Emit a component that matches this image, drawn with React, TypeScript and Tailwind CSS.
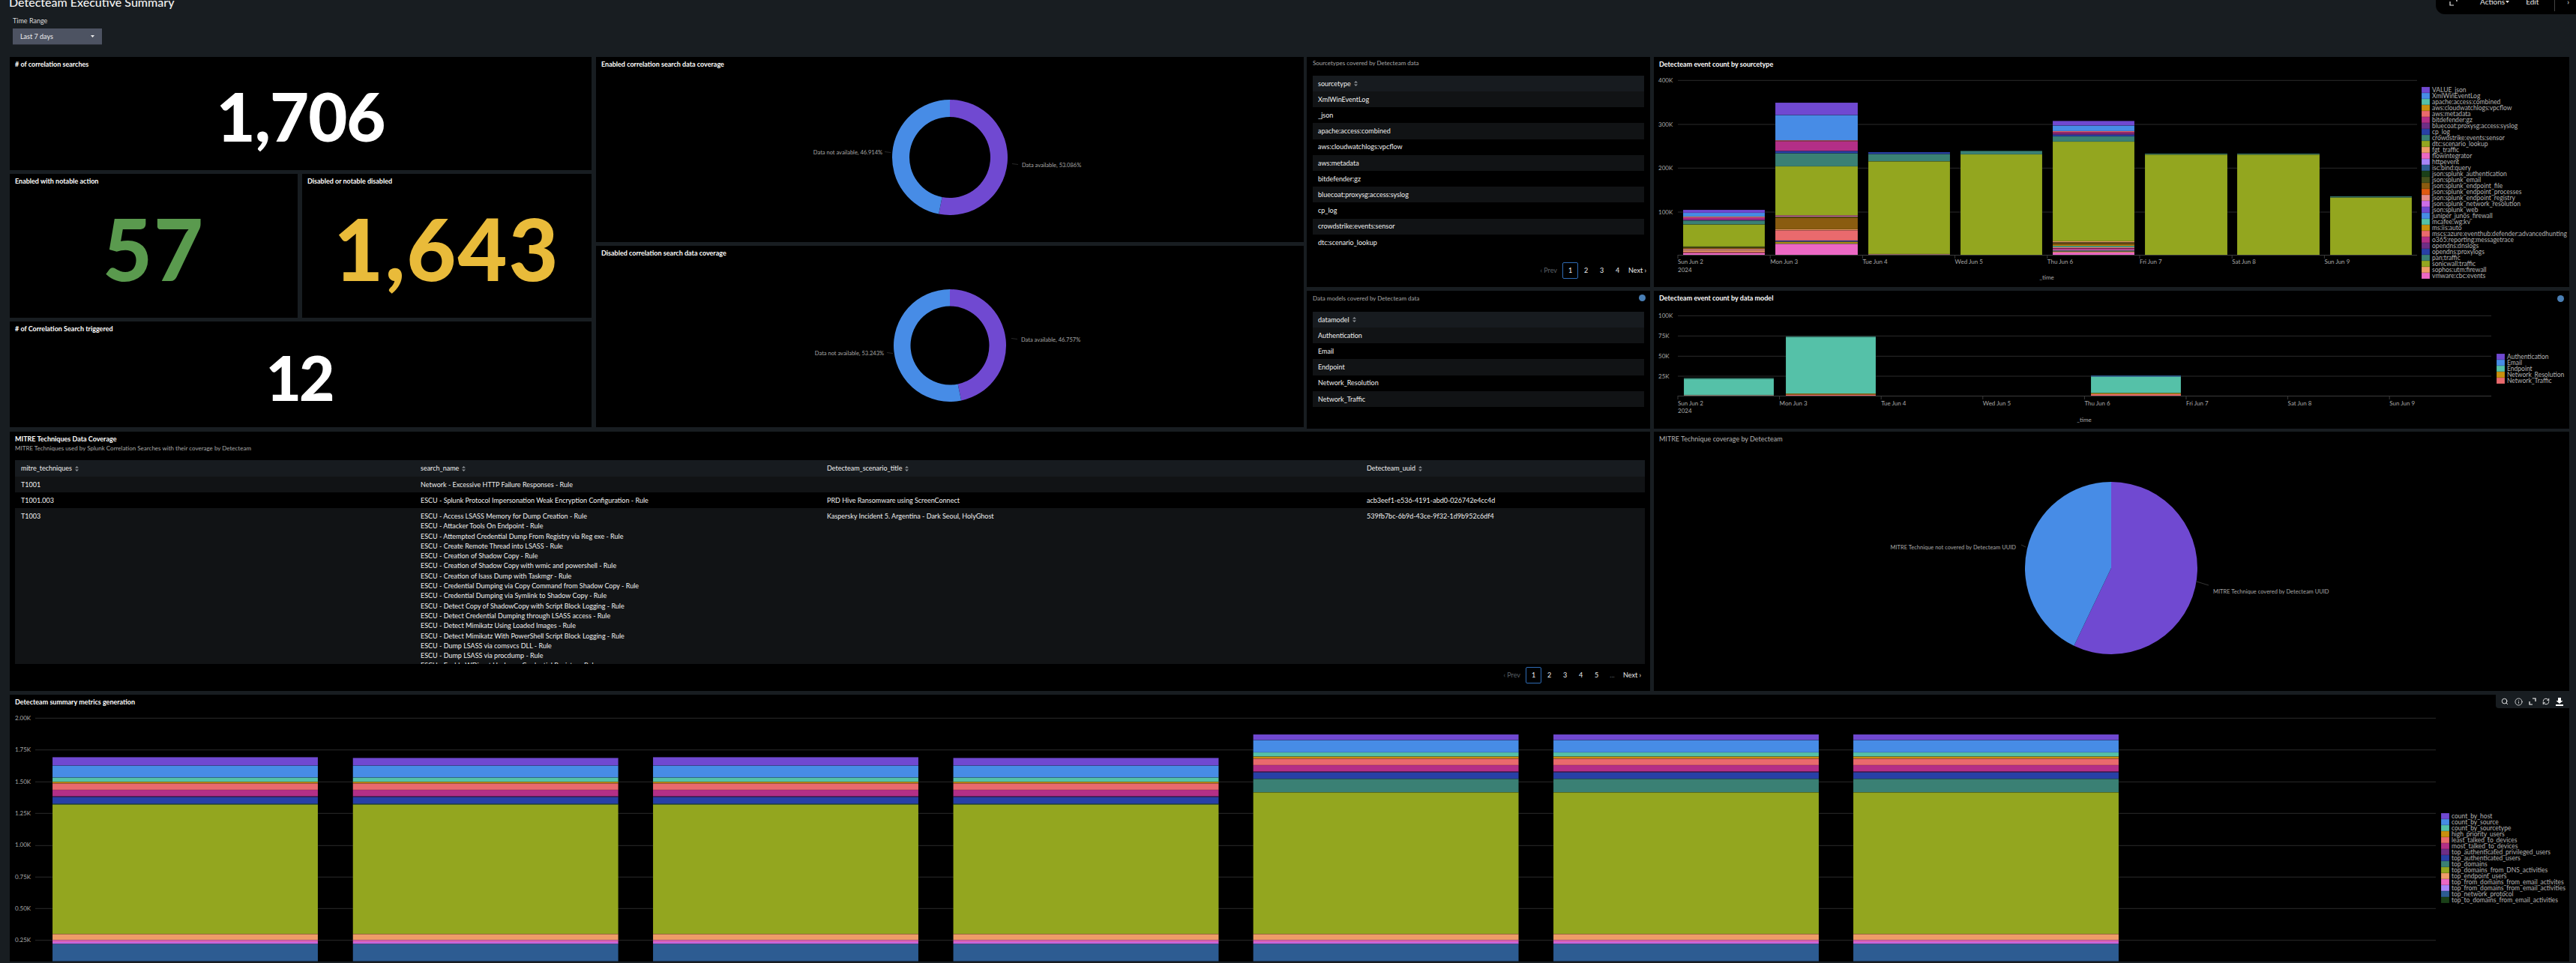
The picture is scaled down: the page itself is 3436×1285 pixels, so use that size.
import { Info, RefreshCw, Search } from 'lucide-react';
import type { ReactNode } from 'react';

const C = {
  purple: '#7049d1',
  blue: '#478ce6',
  teal: '#55c1a8',
  gold: '#c8900f',
  coral: '#e96a6d',
  magenta: '#b32f87',
  plum: '#6e2e86',
  navy: '#2840a6',
  pine: '#3a8074',
  olive: '#93a61f',
  peach: '#ee9c68',
  pink: '#ec68c4',
  lav: '#a785f8',
  steel: '#2d5c92',
  forest: '#1a4018',
  moss: '#45521c',
  brown: '#8a5c10',
  orange: '#de5910',
  salmon: '#e58a88',
  violet: '#cd6de8',
};

type Seg = [number, number, string];

// y values of the segments are thirds of a pixel, same as the crop I measured from
const sourcetypeBars: { x: number; w: number; segs: Seg[] }[] = [
  {
    x: 2245, w: 109,
    segs: [
      [840, 852, C.purple], [852, 867, C.blue], [867, 870, C.peach], [870, 879, C.magenta], [879, 883, C.plum],
      [883, 899, C.pine], [899, 987, C.olive], [987, 992, C.moss], [992, 997, C.brown], [997, 1003, C.salmon],
      [1003, 1009, C.peach], [1009, 1013, C.coral], [1013, 1021, C.pink],
    ],
  },
  {
    x: 2368, w: 110,
    segs: [
      [411, 461, C.purple], [461, 562, C.blue], [562, 566, C.coral], [566, 605, C.magenta], [605, 614, C.navy],
      [614, 666, C.pine], [666, 863, C.olive], [863, 867, C.pink], [867, 871, C.moss], [871, 918, C.brown],
      [918, 922, C.peach], [922, 963, C.coral], [963, 968, C.navy], [968, 972, C.gold], [972, 976, C.olive],
      [976, 1021, C.pink],
    ],
  },
  { x: 2492, w: 109, segs: [[609, 617, C.navy], [617, 646, C.pine], [646, 1017, C.olive], [1017, 1021, '#a06c6c']] },
  { x: 2615, w: 109, segs: [[604, 618, C.pine], [618, 1021, C.olive]] },
  {
    x: 2738, w: 109,
    segs: [
      [484, 503, C.purple], [503, 525, C.blue], [525, 529, C.coral], [529, 535, C.magenta], [535, 540, C.plum],
      [540, 546, C.navy], [546, 567, C.pine], [567, 966, C.olive], [966, 971, C.peach], [971, 974, C.moss],
      [974, 981, C.brown], [981, 985, C.gold], [985, 990, C.teal], [990, 994, C.coral], [994, 998, C.magenta],
      [998, 1003, C.pink], [1003, 1007, C.pine], [1007, 1011, C.peach], [1011, 1021, C.pink],
    ],
  },
  { x: 2861, w: 110, segs: [[615, 619, C.pine], [619, 1021, C.olive]] },
  { x: 2984, w: 110, segs: [[615, 619, C.pine], [619, 1021, C.olive]] },
  { x: 3108, w: 109, segs: [[786, 791, C.pine], [791, 1021, C.olive]] },
];

const modelBars: { x: number; w: number; segs: Seg[] }[] = [
  { x: 2246, w: 120, segs: [[370, 373, C.pine], [373, 438, C.teal], [438, 442, '#8a8a7a']] },
  { x: 2382, w: 120, segs: [[203, 207, C.pine], [207, 433, C.teal], [433, 437, C.gold], [437, 442, C.coral]] },
  { x: 2789, w: 120, segs: [[361, 365, C.blue], [365, 431, C.teal], [431, 435, C.gold], [435, 442, C.coral]] },
];

const metricSegs = (top: number): Seg[] => [
  [top, 305, C.purple], [305, 353, C.blue], [353, 370, C.teal], [370, 376, C.gold], [376, 402, C.coral],
  [402, 428, C.magenta], [428, 431, C.plum], [431, 458, C.navy], [458, 461, C.pine], [461, 979, C.olive],
  [979, 1003, C.peach], [1003, 1011, C.pink], [1011, 1019, C.violet], [1019, 1088, C.steel],
];
const metricSegsTall: Seg[] = [
  [180, 203, C.purple], [203, 252, C.blue], [252, 269, C.teal], [269, 277, C.gold], [277, 303, C.coral],
  [303, 329, C.magenta], [329, 332, C.plum], [332, 358, C.navy], [358, 412, C.pine], [412, 979, C.olive],
  [979, 1003, C.peach], [1003, 1011, C.pink], [1011, 1019, C.violet], [1019, 1088, C.steel],
];
const metricBars: { x: number; segs: Seg[] }[] = [
  { x: 70, segs: metricSegs(271) },
  { x: 470.7, segs: metricSegs(274) },
  { x: 871, segs: metricSegs(271) },
  { x: 1271.5, segs: metricSegs(274) },
  { x: 1671.6, segs: metricSegsTall },
  { x: 2072, segs: metricSegsTall },
  { x: 2472, segs: metricSegsTall },
];

const sourcetypeLegend: [string, string][] = [
  ['VALUE_json', C.purple], ['XmlWinEventLog', C.blue], ['apache:access:combined', C.teal],
  ['aws:cloudwatchlogs:vpcflow', C.gold], ['aws:metadata', C.coral], ['bitdefender:gz', C.magenta],
  ['bluecoat:proxysg:access:syslog', C.plum], ['cp_log', C.navy], ['crowdstrike:events:sensor', C.pine],
  ['dtc:scenario_lookup', C.olive], ['fgt_traffic', C.peach], ['flowintegrator', C.pink], ['httpevent', C.lav],
  ['isc:bind:query', C.steel], ['json:splunk_authentication', C.forest], ['json:splunk_email', C.moss],
  ['json:splunk_endpoint_file', C.brown], ['json:splunk_endpoint_processes', C.orange],
  ['json:splunk_endpoint_registry', C.salmon], ['json:splunk_network_resolution', C.violet],
  ['json:splunk_web', C.purple], ['juniper_junos_firewall', C.blue], ['mcafee:wg:kv', C.teal],
  ['ms:iis:auto', C.gold], ['mscs:azure:eventhub:defender:advancedhunting', C.coral],
  ['o365:reporting:messagetrace', C.magenta], ['opendns:dnslogs', C.plum], ['opendns:proxylogs', C.navy],
  ['pan:traffic', C.pine], ['sonicwall:traffic', C.olive], ['sophos:utm:firewall', C.peach],
  ['vmware:cbc:events', C.pink],
];
const modelLegend: [string, string][] = [
  ['Authentication', C.purple], ['Email', C.blue], ['Endpoint', C.teal], ['Network_Resolution', C.gold],
  ['Network_Traffic', C.coral],
];
const metricLegend: [string, string][] = [
  ['count_by_host', C.purple], ['count_by_source', C.blue], ['count_by_sourcetype', C.teal],
  ['high_priority_users', C.gold], ['least_talked_to_devices', C.coral], ['most_talked_to_devices', C.magenta],
  ['top_authenticated_privileged_users', C.plum], ['top_authenticated_users', C.navy], ['top_domains', C.pine],
  ['top_domains_from_DNS_activities', C.olive], ['top_endpoint_users', C.peach],
  ['top_from_domains_from_email_activites', C.pink], ['top_from_domains_from_email_activities', C.lav],
  ['top_network_protocol', C.steel], ['top_to_domains_from_email_activities', C.forest],
];

const days = ['Sun Jun 2', 'Mon Jun 3', 'Tue Jun 4', 'Wed Jun 5', 'Thu Jun 6', 'Fri Jun 7', 'Sat Jun 8', 'Sun Jun 9'];

const sourcetypes = [
  'XmlWinEventLog', '_json', 'apache:access:combined', 'aws:cloudwatchlogs:vpcflow', 'aws:metadata', 'bitdefender:gz',
  'bluecoat:proxysg:access:syslog', 'cp_log', 'crowdstrike:events:sensor', 'dtc:scenario_lookup',
];
const datamodels = ['Authentication', 'Email', 'Endpoint', 'Network_Resolution', 'Network_Traffic'];

const t1003 = [
  'ESCU - Access LSASS Memory for Dump Creation - Rule',
  'ESCU - Attacker Tools On Endpoint - Rule',
  'ESCU - Attempted Credential Dump From Registry via Reg exe - Rule',
  'ESCU - Create Remote Thread into LSASS - Rule',
  'ESCU - Creation of Shadow Copy - Rule',
  'ESCU - Creation of Shadow Copy with wmic and powershell - Rule',
  'ESCU - Creation of lsass Dump with Taskmgr - Rule',
  'ESCU - Credential Dumping via Copy Command from Shadow Copy - Rule',
  'ESCU - Credential Dumping via Symlink to Shadow Copy - Rule',
  'ESCU - Detect Copy of ShadowCopy with Script Block Logging - Rule',
  'ESCU - Detect Credential Dumping through LSASS access - Rule',
  'ESCU - Detect Mimikatz Using Loaded Images - Rule',
  'ESCU - Detect Mimikatz With PowerShell Script Block Logging - Rule',
  'ESCU - Dump LSASS via comsvcs DLL - Rule',
  'ESCU - Dump LSASS via procdump - Rule',
  'ESCU - Enable WDigest UseLogonCredential Registry - Rule',
];

function polar(cx: number, cy: number, r: number, frac: number) {
  const a = frac * Math.PI * 2;
  return [cx + r * Math.sin(a), cy - r * Math.cos(a)];
}

function ringPath(cx: number, cy: number, r: number, ir: number, from: number, to: number) {
  const large = to - from > 0.5 ? 1 : 0;
  const [x1, y1] = polar(cx, cy, r, from);
  const [x2, y2] = polar(cx, cy, r, to);
  if (ir === 0) return `M${cx} ${cy}L${x1} ${y1}A${r} ${r} 0 ${large} 1 ${x2} ${y2}Z`;
  const [x3, y3] = polar(cx, cy, ir, to);
  const [x4, y4] = polar(cx, cy, ir, from);
  return `M${x1} ${y1}A${r} ${r} 0 ${large} 1 ${x2} ${y2}L${x3} ${y3}A${ir} ${ir} 0 ${large} 0 ${x4} ${y4}Z`;
}

function Panel({ className, children }: { className: string; children: ReactNode }) {
  return <div className={`relative flex flex-col overflow-hidden bg-black ${className}`}>{children}</div>;
}

function PanelTitle({ children, muted, dot }: { children: ReactNode; muted?: boolean; dot?: boolean }) {
  return (
    <div
      className={`flex h-[20px] shrink-0 items-center justify-between pl-[7px] pr-[7px] text-[9px] ${muted ? 'text-[#b4b4b4]' : 'font-bold text-white'}`}
    >
      <span>{children}</span>
      {dot && <span className="h-[9px] w-[9px] rounded-full bg-[#4a7fb5]" />}
    </div>
  );
}

function BigNumber({ value, className }: { value: string; className: string }) {
  return <div className={`text-center leading-none font-black ${className}`}>{value}</div>;
}

function SortIcon() {
  return (
    <svg width="5" height="7" viewBox="0 0 5 7" className="ml-[4px] shrink-0" fill="#8b9096">
      <path d="M2.5 0L5 2.6H0Z" />
      <path d="M2.5 7L0 4.4H5Z" />
    </svg>
  );
}

function Pager({ pages, more }: { pages: number[]; more?: boolean }) {
  return (
    <div className="flex h-[22px] items-center justify-end pr-[5px] text-[9px] text-[#f0f0f0]">
      <span className="mr-[7px] text-[#5b6068]">‹ Prev</span>
      {pages.map((p) => (
        <span
          key={p}
          className={`flex h-[22px] w-[21px] items-center justify-center ${p === 1 ? 'rounded-[2px] border border-[#2f6bb5]' : ''}`}
        >
          {p}
        </span>
      ))}
      {more && <span className="w-[21px] text-center text-[#5b6068]">...</span>}
      <span className="ml-[4px]">Next ›</span>
    </div>
  );
}

function SingleColTable({ head, rows }: { head: string; rows: string[] }) {
  return (
    <div className="mx-[8px] text-[9px] text-[#f0f0f0]">
      <div className="flex h-[21px] items-center bg-[#171b1f] pl-[7px]">
        {head}
        <SortIcon />
      </div>
      {rows.map((r, i) => (
        <div key={r} className={`flex h-[21.2px] items-center pl-[7px] ${i % 2 === 0 ? 'bg-[#111315]' : ''}`}>
          {r}
        </div>
      ))}
    </div>
  );
}

function Legend({ items, x, y }: { items: [string, string][]; x: number; y: number }) {
  return (
    <g>
      {items.map(([name, color], i) => (
        <g key={name}>
          <rect x={x} y={y + i * 8} width={11} height={8} fill={color} stroke="#000" strokeOpacity={0.3} strokeWidth={0.5} />
          <text x={x + 14} y={y + i * 8 + 7} fontSize={8.5} fill="#b4b4b4">
            {name}
          </text>
        </g>
      ))}
    </g>
  );
}

function Segments({ x, w, segs }: { x: number; w: number; segs: Seg[] }) {
  return (
    <g>
      {segs.map(([a, b, color], i) => (
        <rect key={i} x={x} y={a / 3} width={w} height={(b - a) / 3} fill={color} stroke="#000" strokeOpacity={0.22} strokeWidth={0.5} />
      ))}
    </g>
  );
}

function AxisLabel({ x, y, children, anchor }: { x: number; y: number; children: ReactNode; anchor?: 'end' | 'middle' }) {
  return (
    <text x={x} y={y} fontSize={8} fill="#a8a8a8" textAnchor={anchor}>
      {children}
    </text>
  );
}

function Donut(props: {
  box: string;
  cx: number;
  cy: number;
  r: number;
  ir: number;
  frac: number;
  left: { t: string; x: number; y: number; lx: number };
  right: { t: string; x: number; y: number; lx: number };
}) {
  const { box, cx, cy, r, ir, frac, left, right } = props;
  return (
    <svg viewBox={box} className="block min-h-0 w-full flex-1">
      <path d={ringPath(cx, cy, r, ir, 0, frac)} fill={C.purple} />
      <path d={ringPath(cx, cy, r, ir, frac, 1)} fill={C.blue} />
      <path d={`M${left.lx} ${left.y - 3}l8 1`} stroke="#333" fill="none" strokeWidth={0.8} />
      <path d={`M${right.lx} ${right.y - 3}l-8 -1`} stroke="#333" fill="none" strokeWidth={0.8} />
      <text x={left.x} y={left.y} fontSize={7.5} fill="#a8a8a8" textAnchor="end">
        {left.t}
      </text>
      <text x={right.x} y={right.y} fontSize={7.5} fill="#a8a8a8">
        {right.t}
      </text>
    </svg>
  );
}

export default function App() {
  return (
    <div className="relative h-[1285px] w-[3436px] overflow-hidden bg-[#181d21] [font-family:Lato,sans-serif]">
      {/* top right actions bar */}
      <div className="absolute top-0 right-0 flex h-[19px] w-[187px] items-start rounded-bl-[12px] bg-black text-[10px] leading-[10px] text-[#e8e8e8]">
        <svg width="12" height="10" viewBox="0 0 12 10" className="mt-[-1px] ml-[18px]" fill="none" stroke="#e8e8e8" strokeWidth="1.2">
          <path d="M1 3v5h5" />
          <path d="M9 1h1v2" />
        </svg>
        <span className="mt-[-3px] ml-[29px] flex items-center">
          Actions
          <svg width="5" height="3" viewBox="0 0 5 3" className="ml-[1px]" fill="#e8e8e8">
            <path d="M0 0h5L2.5 3Z" />
          </svg>
        </span>
        <span className="mt-[-3px] ml-[22px]">Edit</span>
        <span className="ml-[21px] h-[15px] w-px bg-[#444]" />
        <span className="mt-[-3px] ml-[16px]">›</span>
      </div>

      {/* dashboard header */}
      <div className="flex h-[76px] flex-col pl-[12px]">
        <h1 className="mt-[-7px] h-[26px] shrink-0 text-[16px] leading-[20px] font-medium text-[#f2f2f2]">Detecteam Executive Summary</h1>
        <div className="mt-[3px] ml-[5px] text-[9px] leading-[12px] text-[#dcdcdc]">Time Range</div>
        <div className="mt-[4px] ml-[5px] flex h-[22px] w-[119px] items-center justify-between border-b border-[#2c3038] bg-[#4d5362] pr-[10px] pl-[10px] text-[9px] text-[#eeeeee]">
          Last 7 days
          <svg width="5" height="3" viewBox="0 0 5 3" fill="#eeeeee">
            <path d="M0 0h5L2.5 3Z" />
          </svg>
        </div>
      </div>

      <div className="pl-[13px]">
        {/* first block of panels */}
        <div className="flex h-[496px] items-start">
          <div className="flex w-[776px] flex-col gap-[5px]">
            <Panel className="h-[151px]">
              <PanelTitle># of correlation searches</PanelTitle>
              <BigNumber value="1,706" className="pt-[13px] text-[90px] tracking-[-1px] text-white" />
            </Panel>
            <div className="flex gap-[6px]">
              <Panel className="h-[192px] w-[384px]">
                <PanelTitle>Enabled with notable action</PanelTitle>
                <BigNumber value="57" className="pt-[22px] text-[114px] tracking-[2px] text-[#5a9a4e]" />
              </Panel>
              <Panel className="h-[192px] w-[386px]">
                <PanelTitle>Disabled or notable disabled</PanelTitle>
                <BigNumber value="1,643" className="pt-[22px] text-[114px] tracking-[2px] text-[#e9bb3a]" />
              </Panel>
            </div>
            <Panel className="h-[141px]">
              <PanelTitle># of Correlation Search triggered</PanelTitle>
              <BigNumber value="12" className="pt-[13px] pr-[4px] text-[82px] tracking-[-3px] text-white" />
            </Panel>
          </div>

          <div className="ml-[6px] flex w-[944px] flex-col gap-[5px]">
            <Panel className="h-[247px]">
              <PanelTitle>Enabled correlation search data coverage</PanelTitle>
              <Donut
                box="795 96 944 227"
                cx={1267}
                cy={210}
                r={77}
                ir={54}
                frac={0.53086}
                left={{ t: 'Data not available, 46.914%', x: 1177, y: 205.5, lx: 1180 }}
                right={{ t: 'Data available, 53.086%', x: 1363, y: 222.5, lx: 1358 }}
              />
            </Panel>
            <Panel className="h-[242px]">
              <PanelTitle>Disabled correlation search data coverage</PanelTitle>
              <Donut
                box="795 348 944 222"
                cx={1267}
                cy={461}
                r={75}
                ir={52.5}
                frac={0.46757}
                left={{ t: 'Data not available, 53.243%', x: 1179, y: 473.5, lx: 1183 }}
                right={{ t: 'Data available, 46.757%', x: 1362, y: 455.5, lx: 1357 }}
              />
            </Panel>
          </div>

          <div className="ml-[4px] flex w-[458px] flex-col gap-[5px]">
            <Panel className="h-[307px]">
              <div className="h-[25px] pt-[3px] pl-[8px] text-[8px] leading-[10px] text-[#a8a8a8]">Sourcetypes covered by Detecteam data</div>
              <SingleColTable head="sourcetype" rows={sourcetypes} />
              <div className="mt-[16px]">
                <Pager pages={[1, 2, 3, 4]} />
              </div>
            </Panel>
            <Panel className="h-[184px]">
              <div className="flex h-[28px] justify-between pt-[5px] pr-[6px] pl-[8px] text-[8px] leading-[10px] text-[#a8a8a8]">
                Data models covered by Detecteam data
                <span className="h-[9px] w-[9px] rounded-full bg-[#4a7fb5]" />
              </div>
              <SingleColTable head="datamodel" rows={datamodels} />
            </Panel>
          </div>

          <div className="ml-[5px] flex w-[1221px] flex-col gap-[5px]">
            <Panel className="h-[307px]">
              <PanelTitle>Detecteam event count by sourcetype</PanelTitle>
              <svg viewBox="2206 96 1221 287" className="block min-h-0 w-full flex-1">
                {[107.3, 166, 224.3, 283].map((y) => (
                  <line key={y} x1={2238} x2={3224} y1={y} y2={y} stroke="#2b2b2b" />
                ))}
                {[['400K', 110], ['300K', 169], ['200K', 227], ['100K', 286]].map(([l, y]) => (
                  <AxisLabel key={l} x={2212} y={Number(y)}>
                    {l}
                  </AxisLabel>
                ))}
                {sourcetypeBars.map((b) => (
                  <Segments key={b.x} {...b} />
                ))}
                <line x1={2238} x2={3224} y1={340.5} y2={340.5} stroke="#3a3a3a" />
                {days.map((d, i) => (
                  <g key={d}>
                    <line x1={2238 + i * 123.2} x2={2238 + i * 123.2} y1={340} y2={345} stroke="#3a3a3a" />
                    <AxisLabel x={2238 + i * 123.2} y={352}>
                      {d}
                    </AxisLabel>
                  </g>
                ))}
                <AxisLabel x={2238} y={363}>
                  2024
                </AxisLabel>
                <AxisLabel x={2730} y={373} anchor="middle">
                  _time
                </AxisLabel>
                <Legend items={sourcetypeLegend} x={3230} y={116} />
              </svg>
            </Panel>
            <Panel className="h-[184px]">
              <PanelTitle dot>Detecteam event count by data model</PanelTitle>
              <svg viewBox="2206 407 1221 164" className="block min-h-0 w-full flex-1">
                {[420.3, 447.3, 474.3, 501].map((y) => (
                  <line key={y} x1={2238} x2={3323} y1={y} y2={y} stroke="#2b2b2b" />
                ))}
                {[['100K', 423], ['75K', 450], ['50K', 477], ['25K', 504]].map(([l, y]) => (
                  <AxisLabel key={l} x={2212} y={Number(y)}>
                    {l}
                  </AxisLabel>
                ))}
                {modelBars.map((b) => (
                  <Segments key={b.x} x={b.x} w={b.w} segs={b.segs.map(([a, c, col]) => [a + 1140, c + 1140, col] as Seg)} />
                ))}
                <line x1={2238} x2={3323} y1={527.5} y2={527.5} stroke="#3a3a3a" />
                {days.map((d, i) => (
                  <g key={d}>
                    <line x1={2238 + i * 135.6} x2={2238 + i * 135.6} y1={527} y2={532} stroke="#3a3a3a" />
                    <AxisLabel x={2238 + i * 135.6} y={540}>
                      {d}
                    </AxisLabel>
                  </g>
                ))}
                <AxisLabel x={2238} y={550}>
                  2024
                </AxisLabel>
                <AxisLabel x={2780} y={562} anchor="middle">
                  _time
                </AxisLabel>
                <Legend items={modelLegend} x={3330} y={471} />
              </svg>
            </Panel>
          </div>
        </div>

        {/* second row */}
        <div className="mt-[4px] flex h-[346px] gap-[5px]">
          <Panel className="w-[2188px]">
            <div className="px-[7px] pt-[4px] text-[9px] leading-[12px]">
              <div className="font-bold text-white">MITRE Techniques Data Coverage</div>
              <div className="text-[8px] text-[#a8a8a8]">MITRE Techniques used by Splunk Correlation Searches with their coverage by Detecteam</div>
            </div>
            <div className="mt-[10px] ml-[7px] w-[2174px] text-[9px] text-[#f0f0f0]">
              <div className="grid h-[22px] grid-cols-[533px_542px_720px_379px] items-center bg-[#171b1f]">
                {['mitre_techniques', 'search_name', 'Detecteam_scenario_title', 'Detecteam_uuid'].map((h) => (
                  <div key={h} className="flex items-center pl-[8px]">
                    {h}
                    <SortIcon />
                  </div>
                ))}
              </div>
              <div className="grid h-[21px] grid-cols-[533px_542px_720px_379px] items-center bg-[#111315]">
                <div className="pl-[8px]">T1001</div>
                <div className="pl-[8px]">Network - Excessive HTTP Failure Responses - Rule</div>
              </div>
              <div className="grid h-[21px] grid-cols-[533px_542px_720px_379px] items-center">
                <div className="pl-[8px]">T1001.003</div>
                <div className="pl-[8px]">ESCU - Splunk Protocol Impersonation Weak Encryption Configuration - Rule</div>
                <div className="pl-[8px]">PRD Hive Ransomware using ScreenConnect</div>
                <div className="pl-[8px]">acb3eef1-e536-4191-abd0-026742e4cc4d</div>
              </div>
              <div className="grid h-[208px] grid-cols-[533px_542px_720px_379px] overflow-hidden bg-[#111315] pt-[4px] leading-[13.3px]">
                <div className="pl-[8px]">T1003</div>
                <div className="pl-[8px]">
                  {t1003.map((s) => (
                    <div key={s}>{s}</div>
                  ))}
                </div>
                <div className="pl-[8px]">Kaspersky Incident 5. Argentina - Dark Seoul, HolyGhost</div>
                <div className="pl-[8px]">539fb7bc-6b9d-43ce-9f32-1d9b952c6df4</div>
              </div>
              <div className="mt-[4px]">
                <Pager pages={[1, 2, 3, 4, 5]} more />
              </div>
            </div>
          </Panel>
          <Panel className="w-[1221px]">
            <PanelTitle muted>MITRE Technique coverage by Detecteam</PanelTitle>
            <svg viewBox="2206 596 1221 326" className="block min-h-0 w-full flex-1">
              <path d={ringPath(2816, 758, 115, 0, 0, 0.571)} fill={C.purple} />
              <path d={ringPath(2816, 758, 115, 0, 0.571, 1)} fill={C.blue} />
              <path d="M2696 727l6 3" stroke="#444" strokeWidth={0.8} />
              <path d="M2930 776l16 5" stroke="#444" strokeWidth={0.8} />
              <text x={2689} y={733} fontSize={7.5} fill="#a8a8a8" textAnchor="end">
                MITRE Technique not covered by Detecteam UUID
              </text>
              <text x={2952} y={792} fontSize={7.5} fill="#a8a8a8">
                MITRE Technique covered by Detecteam UUID
              </text>
            </svg>
          </Panel>
        </div>

        {/* bottom chart */}
        <Panel className="mt-[5px] h-[356px] w-[3414px]">
          <PanelTitle>Detecteam summary metrics generation</PanelTitle>
          <div className="absolute top-0 right-0 flex h-[18px] w-[98px] items-center gap-[8px] rounded-bl-[4px] bg-[#181d21] pl-[7px] text-white">
            <Search size={10} strokeWidth={2} />
            <Info size={11} strokeWidth={1.6} />
            <svg width="10" height="10" viewBox="0 0 10 10" fill="none" stroke="white" strokeWidth="1.2">
              <path d="M1 5v4h4" />
              <path d="M5 1h4v4" />
            </svg>
            <RefreshCw size={10} strokeWidth={2} />
            <svg width="10" height="11" viewBox="0 0 10 11" fill="white">
              <path d="M3 0h4v4h2.5L5 8 .5 4H3Z" />
              <path d="M0 9h10v2H0Z" />
            </svg>
          </div>
          <svg viewBox="13 947 3414 336" className="block min-h-0 w-full flex-1">
            {[958.3, 1000.7, 1043.3, 1085.3, 1128.3, 1170.3, 1212.3, 1254.7].map((y) => (
              <line key={y} x1={47} x2={3249} y1={y} y2={y} stroke="#2b2b2b" />
            ))}
            {['2.00K', '1.75K', '1.50K', '1.25K', '1.00K', '0.75K', '0.50K', '0.25K'].map((l, i) => (
              <AxisLabel key={l} x={20} y={961 + i * 42.3}>
                {l}
              </AxisLabel>
            ))}
            {metricBars.map((b) => (
              <Segments key={b.x} x={b.x} w={354} segs={b.segs.map(([a, c, col]) => [a + 2760, c + 2760, col] as Seg)} />
            ))}
            <Legend items={metricLegend} x={3256} y={1085} />
          </svg>
        </Panel>
      </div>
    </div>
  );
}
